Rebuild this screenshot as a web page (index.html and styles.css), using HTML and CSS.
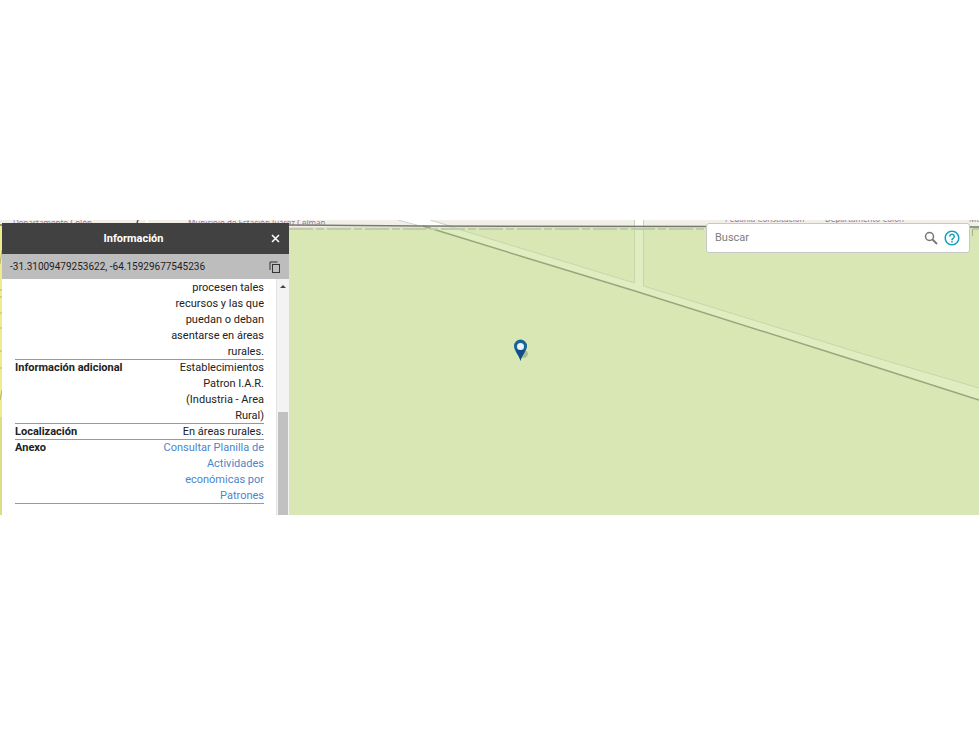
FILE: index.html
```html
<!DOCTYPE html>
<html lang="es">
<head>
<meta charset="utf-8">
<title>Mapa - Información</title>
<link rel="stylesheet" href="styles.css">
</head>
<body>
<main class="viewer">
  <svg class="map" viewBox="0 0 979 295" preserveAspectRatio="xMinYMin slice" aria-hidden="true">
    <rect width="979" height="295" fill="#d9e7b5"/>
    <rect width="979" height="7" fill="#f2efe9"/>
    <path d="M398 0H430L450 7H420Z" fill="#fff"/>
    <path d="M398 0L420 6M430 0L450 6" stroke="#d0cfc8" fill="none"/>
    <path d="M423 6H448L530 31L635 63V0H643V66L860 133L979 168V180L860 142L635 71L530 39Z" fill="#dfeec0"/>
    <rect x="635" width="8" height="6" fill="#fff"/>
    <path d="M448 6L530 31L634.500 63V0M643.500 0V66L860 133L979 168" stroke="#c8d5aa" fill="none"/>
    <path d="M423 6L530 39L635 71L860 142L979 180" stroke="#98a67c" stroke-width="1.5" fill="none"/>
    <path d="M289 9H979" stroke="#c3c9ac" stroke-width="2" stroke-dasharray="24 3 8 3" fill="none"/>
    <path d="M0 5H289L420 6L979 7" stroke="#757c6b" stroke-width="1.5" fill="none"/>
    <rect y="6" width="3" height="191" fill="#efec8b"/>
    <rect y="197" width="3" height="98" fill="#dedc86"/>
    <path d="M0 44L2 30M0 70H2M0 77H2M0 94L2 92M0 108H2M0 131H2M0 148H2M0 180L2 170" stroke="#b9b56d" fill="none"/>
    <path d="M137 3L138 0" stroke="#555" stroke-width="1.5"/>
    <path d="M147 0V3" stroke="#fff" stroke-width="3"/>
    <path d="M972.500 9V16" stroke="#a6ad90"/>
    <g class="map-label">
      <text x="13" y="6">Departamento Colón</text>
      <text x="188" y="6">Municipio de Estación Juárez Celman</text>
      <text x="725" y="2">Pedanía Constitución</text>
      <text x="825" y="2">Departamento Colón</text>
      <text x="969" y="2">Mu</text>
    </g>
    <ellipse cx="523" cy="134" rx="5" ry="4" fill="#93a378" opacity=".6"/>
    <path d="M520.500 141C519 135 514 131 514 126A6.500 6.500 0 0 1 527 126C527 131 522 135 520.500 141Z" fill="#17649c"/>
    <path d="M520.500 141C520 137 517 133 516 130H525C524 133 521 137 520.500 141Z" fill="#124d85"/>
    <circle cx="520.500" cy="126.500" r="3.500" fill="#e9f3f8"/>
  </svg>

  <section class="panel" aria-label="Información">
    <header class="panel-header">
      <h1 class="panel-title">Información</h1>
      <button class="icon-button" type="button" aria-label="Cerrar">
        <svg width="9" height="9" viewBox="0 0 9 9"><path d="M1 1L8 8M8 1L1 8" stroke="#fff" stroke-width="1.5"/></svg>
      </button>
    </header>
    <div class="coords">
      <span>-31.31009479253622, -64.15929677545236</span>
      <button class="icon-button" type="button" aria-label="Copiar">
        <svg width="12" height="12" viewBox="0 0 12 12" fill="none" stroke="#333"><path d="M1 9V1H8.500"/><rect x="3.500" y="3.500" width="7" height="8"/></svg>
      </button>
    </div>
    <div class="panel-body">
      <table class="details">
        <tr><th scope="row"></th><td>procesen tales recursos y las que puedan o deban asentarse en áreas rurales.</td></tr>
        <tr><th scope="row">Información adicional</th><td>Establecimientos Patron I.A.R. (Industria - Area Rural)</td></tr>
        <tr><th scope="row">Localización</th><td>En áreas rurales.</td></tr>
        <tr><th scope="row">Anexo</th><td><a href="#">Consultar Planilla de Actividades económicas por Patrones</a></td></tr>
      </table>
      <div class="scrollbar" aria-hidden="true">
        <svg width="6" height="3" viewBox="0 0 6 3"><path d="M0 3L3 0L6 3Z" fill="#444"/></svg>
        <div class="thumb"></div>
      </div>
    </div>
  </section>

  <form class="search">
    <input type="search" placeholder="Buscar" aria-label="Buscar">
    <button class="icon-button" type="submit" aria-label="Buscar">
      <svg width="14" height="14" viewBox="0 0 14 14" fill="none" stroke="#757575"><circle cx="5.500" cy="5.500" r="4" stroke-width="1.500"/><path d="M8.500 8.500L13 13" stroke-width="1.800"/></svg>
    </button>
    <button class="icon-button" type="button" aria-label="Ayuda">
      <svg width="18" height="18" viewBox="0 0 24 24" fill="#17a2b8"><path d="M11 18h2v-2h-2v2zm1-16C6.480 2 2 6.480 2 12s4.480 10 10 10 10-4.480 10-10S17.520 2 12 2zm0 18c-4.410 0-8-3.590-8-8s3.590-8 8-8 8 3.590 8 8-3.590 8-8 8zm0-14c-2.210 0-4 1.790-4 4h2c0-1.100.9-2 2-2s2 .9 2 2c0 2-3 1.750-3 5h2c0-2.250 3-2.500 3-5 0-2.210-1.790-4-4-4z" /></svg>
    </button>
  </form>
</main>
</body>
</html>
```
FILE: styles.css
```css
* {
  box-sizing: border-box;
}

body {
  margin: 0;
  padding: 220px 0;
  background: #fff;
  color: #222;
  font: 11px/16px Roboto, "Liberation Sans", sans-serif;
}

.viewer {
  position: relative;
  display: flex;
  justify-content: space-between;
  align-items: flex-start;
  padding: 3px 9px 0 2px;
  overflow: hidden;
}

.map {
  position: absolute;
  inset: 0;
  width: 100%;
  height: 100%;
}

.map-label {
  font: 8px "Noto Sans", sans-serif;
  fill: #94789b;
}

.panel,
.search {
  position: relative;
}

.panel {
  width: 287px;
  background: #fff;
}

.panel-header,
.coords {
  display: flex;
  align-items: center;
  padding: 0 8px;
}

.panel-header {
  height: 31px;
  background: #414141;
  color: #fff;
}

.panel-title {
  flex: 1;
  margin: 0;
  padding-right: 12px;
  font-size: 11px;
  text-align: center;
}

.coords {
  justify-content: space-between;
  height: 25px;
  background: #bdbdbd;
  font-size: 10px;
}

.icon-button {
  display: grid;
  place-items: center;
  width: 12px;
  height: 18px;
  padding: 0;
  border: 0;
  background: none;
}

.panel-body {
  display: flex;
  justify-content: space-between;
  padding-left: 13px;
}

.details {
  width: 249px;
  margin: 1px 0 11px;
  border-collapse: collapse;
}

.details th,
.details td {
  padding: 0;
  box-shadow: inset 0 -1px #999;
  vertical-align: top;
}

.details th {
  text-align: left;
}

.details td {
  width: 104px;
  text-align: right;
}

.details a {
  color: #4c84cb;
  text-decoration: none;
}

.scrollbar {
  display: flex;
  flex-direction: column;
  justify-content: space-between;
  align-items: center;
  width: 13px;
  padding-top: 6px;
  border-left: 1px solid #e4e4e4;
  background: #f3f3f3;
}

.thumb {
  width: 10px;
  height: 45%;
  background: #c1c1c1;
}

.search {
  display: flex;
  align-items: center;
  gap: 3px;
  width: 264px;
  height: 30px;
  padding: 0 8px;
  border: 1px solid #c8c8c8;
  border-radius: 3px;
  background: #fff;
}

.search input {
  flex: 1;
  min-width: 0;
  padding: 0;
  border: 0;
  outline: 0;
  background: none;
  font: inherit;
}

.search input::placeholder {
  color: #7d7d7d;
}

.search .icon-button {
  width: 18px;
}
```
